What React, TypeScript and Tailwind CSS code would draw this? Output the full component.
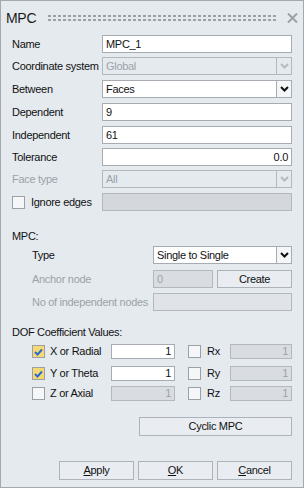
import React from 'react';

const FONT = { fontFamily: '"Liberation Sans", Arial, sans-serif' };

const Chevron = ({ disabled }: { disabled?: boolean }) => (
  <svg width="9" height="6" viewBox="0 0 9 6">
    <path d="M1 1 L4.5 4.5 L8 1" fill="none" stroke={disabled ? '#b4bac0' : '#111'} strokeWidth="2" />
  </svg>
);

const Check = () => (
  <svg width="9" height="8" viewBox="0 0 9 8">
    <path d="M1 4 L3.5 6.5 L8 1.5" fill="none" stroke="#2a6cd4" strokeWidth="2" />
  </svg>
);

const Checkbox = ({ checked }: { checked?: boolean }) => (
  <div
    className={`w-[13px] h-[13px] shrink-0 border border-[#9aa0a6] flex items-center justify-center ${
      checked ? 'bg-[#f6d972]' : 'bg-[#f4f6f8]'
    }`}
  >
    {checked && <Check />}
  </div>
);

const TextBox = ({ value, right, disabled, className = '' }: { value?: string; right?: boolean; disabled?: boolean; className?: string }) => (
  <div
    className={`h-full border flex items-center px-[3px] ${right ? 'justify-end' : ''} ${
      disabled ? 'bg-[#d9dde1] border-[#b3b8bd] text-[#9ca2a8]' : 'bg-white border-[#a6acb2] text-[#111]'
    } ${className}`}
  >
    {value}
  </div>
);

const Select = ({ value, disabled }: { value: string; disabled?: boolean }) => (
  <div className="flex h-full flex-1">
    <div
      className={`flex-1 border flex items-center px-[3px] ${
        disabled ? 'bg-[#e5eaef] border-[#b3b8bd] text-[#9ca2a8]' : 'bg-white border-[#a6acb2] text-[#111]'
      }`}
    >
      {value}
    </div>
    <div
      className={`w-[15px] border border-l-0 flex items-center justify-center ${
        disabled ? 'border-[#b3b8bd] bg-[#e5eaef]' : 'border-[#a6acb2] bg-[#f4f6f8]'
      }`}
    >
      <Chevron disabled={disabled} />
    </div>
  </div>
);

const Btn = ({ children, className = '' }: { children: React.ReactNode; className?: string }) => (
  <div className={`border border-[#adb3b8] bg-[#e9edf1] flex items-center justify-center text-[#111] ${className}`}>
    {children}
  </div>
);

const Row = ({ label, disabled, className, children }: { label: React.ReactNode; disabled?: boolean; className: string; children: React.ReactNode }) => (
  <div className={`flex h-[18px] items-stretch ${className}`}>
    <div className={`w-[90px] shrink-0 flex items-center whitespace-nowrap ${disabled ? 'text-[#9ca2a8]' : 'text-[#111]'}`}>{label}</div>
    <div className="flex-1 flex">{children}</div>
  </div>
);

const DofRow = ({ label, checked, value, rLabel, className }: { label: string; checked?: boolean; value: string; rLabel: string; className: string }) => (
  <div className={`flex h-[15px] items-center ${className}`}>
    <div className="w-[18px] shrink-0 ml-[20px]"><Checkbox checked={checked} /></div>
    <div className="w-[61px] shrink-0 text-[#111] whitespace-nowrap">{label}</div>
    <div className="w-[64px] h-full shrink-0">
      <TextBox value={value} right disabled={!checked} />
    </div>
    <div className="w-[13px] shrink-0" />
    <Checkbox />
    <div className="w-[29px] shrink-0 pl-[6px] text-[#111]">{rLabel}</div>
    <div className="flex-1 h-full">
      <TextBox value="1" right disabled />
    </div>
  </div>
);

export default function App() {
  return (
    <div
      style={FONT}
      className="w-[304px] h-[488px] border border-[#a3a9ae] bg-[#e5eaef] text-[11px] tracking-[-0.3px] leading-none flex flex-col px-[11px] overflow-hidden"
    >
      {/* title bar */}
      <div className="flex items-center h-[33px] -ml-[6px] -mr-[6px] shrink-0">
        <span className="text-[14px] text-[#1a1a1a]">MPC</span>
        <div className="flex-1 ml-[11px] mr-[10px] flex flex-col gap-[2px] overflow-hidden">
          <div className="h-[2px] w-[232px] bg-[radial-gradient(circle,#9ca1a6_60%,transparent_60%)] bg-[length:5px_2px]" />
          <div className="h-[2px] w-[232px] bg-[radial-gradient(circle,#9ca1a6_60%,transparent_60%)] bg-[length:5px_2px]" />
        </div>
        <svg width="11" height="10" viewBox="0 0 11 10">
          <path d="M1 0.5 L10 9.5 M10 0.5 L1 9.5" stroke="#9ba0a5" strokeWidth="2" />
        </svg>
      </div>

      <Row label="Name" className="mt-[1px]">
        <TextBox value="MPC_1" className="flex-1" />
      </Row>
      <Row label="Coordinate system" className="mt-[4px]">
        <Select value="Global" disabled />
      </Row>
      <Row label="Between" className="mt-[5px]">
        <Select value="Faces" />
      </Row>
      <Row label="Dependent" className="mt-[5px]">
        <TextBox value="9" className="flex-1" />
      </Row>
      <Row label="Independent" className="mt-[5px]">
        <TextBox value="61" className="flex-1" />
      </Row>
      <Row label="Tolerance" className="mt-[4px]">
        <TextBox value="0.0" right className="flex-1" />
      </Row>
      <Row label="Face type" disabled className="mt-[4px]">
        <Select value="All" disabled />
      </Row>
      <Row
        label={
          <span className="flex items-center">
            <Checkbox />
            <span className="ml-[6px]">Ignore edges</span>
          </span>
        }
        className="mt-[5px]"
      >
        <TextBox disabled className="flex-1 !bg-[#d4d8dc]" />
      </Row>

      {/* MPC section */}
      <div className="mt-[19px] h-[12px] text-[#111] flex items-center">MPC:</div>
      <div className="flex h-[18px] mt-[4px]">
        <div className="w-[141px] shrink-0 pl-[20px] flex items-center text-[#111]">Type</div>
        <Select value="Single to Single" />
      </div>
      <div className="flex h-[18px] mt-[6px]">
        <div className="w-[141px] shrink-0 pl-[20px] flex items-center text-[#9ca2a8]">Anchor node</div>
        <div className="w-[60px] h-full shrink-0">
          <TextBox value="0" disabled />
        </div>
        <Btn className="ml-[4px] flex-1 text-[#8e949a]">Create</Btn>
      </div>
      <div className="flex h-[18px] mt-[5px]">
        <div className="w-[141px] shrink-0 pl-[20px] flex items-center text-[#9ca2a8] whitespace-nowrap overflow-hidden">
          No of independent nodes
        </div>
        <div className="flex-1 h-full">
          <TextBox disabled className="!bg-[#e0e4e8]" />
        </div>
      </div>

      {/* DOF section */}
      <div className="mt-[15px] h-[12px] flex items-center text-[#111]">DOF Coefficient Values:</div>
      <DofRow label="X or Radial" checked value="1" rLabel="Rx" className="mt-[6px]" />
      <DofRow label="Y or Theta" checked value="1" rLabel="Ry" className="mt-[7px]" />
      <DofRow label="Z or Axial" value="1" rLabel="Rz" className="mt-[5px]" />

      <div className="flex justify-end mt-[16px]">
        <Btn className="w-[153px] h-[19px]">Cyclic MPC</Btn>
      </div>

      <div className="flex justify-end gap-[4px] mt-[25px]">
        <Btn className="w-[75px] h-[19px]"><span><span className="underline">A</span>pply</span></Btn>
        <Btn className="w-[75px] h-[19px]"><span><span className="underline">O</span>K</span></Btn>
        <Btn className="w-[75px] h-[19px]"><span><span className="underline">C</span>ancel</span></Btn>
      </div>
    </div>
  );
}
